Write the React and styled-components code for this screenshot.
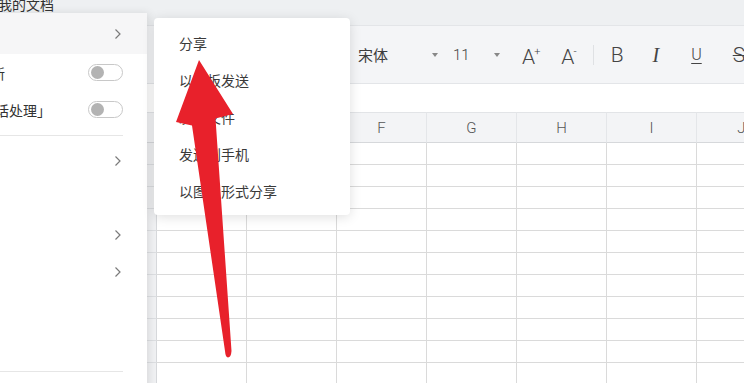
import React from "react";
import styled, { createGlobalStyle } from "styled-components";

const columns = ["", "D", "E", "F", "G", "H", "I", "J"];
const rowCount = 11;

const shareItems = ["分享", "以模板发送", "发送文件", "发送到手机", "以图片形式分享"];

const sideItems = [
  { chevron: true },
  { chevron: false },
  { chevron: true },
  { chevron: true },
  { chevron: false },
  { chevron: false },
];

const Chevron = () => (
  <ChevronIcon width="8" height="12" viewBox="0 0 8 12">
    <path d="M1.5 1.5L6 6l-4.5 4.5" fill="none" stroke="#7a7a7a" strokeWidth="1.2" />
  </ChevronIcon>
);

const Toggle = () => (
  <ToggleTrack>
    <ToggleKnob />
  </ToggleTrack>
);

const App = () => {
  return (
    <>
      <GlobalStyle />
      <Page>
        <TitleBar>
          <DocTitle>我的文档</DocTitle>
        </TitleBar>

        <Toolbar>
          <Select width={82}>
            <span>宋体</span>
            <Caret />
          </Select>
          <Select width={49} offset={13}>
            <Latin>11</Latin>
            <Caret />
          </Select>
          <SizeButton offset={20}>
            A<sup>+</sup>
          </SizeButton>
          <SizeButton offset={21}>
            A<sup>-</sup>
          </SizeButton>
          <Divider />
          <StyleButton offset={17}>B</StyleButton>
          <ItalicButton offset={29}>I</ItalicButton>
          <UnderlineButton offset={32}>U</UnderlineButton>
          <StrikeButton offset={31}>S</StrikeButton>
        </Toolbar>

        <FormulaBar />

        <Sheet>
          {columns.map((c, i) => (
            <HeaderCell key={c + i} corner={i === 0}>
              {c}
            </HeaderCell>
          ))}
          {Array.from({ length: rowCount }).map((_, r) =>
            columns.map((c, i) =>
              i === 0 ? <RowHead key={r + "-" + i} /> : <Cell key={r + "-" + i} />
            )
          )}
        </Sheet>

        <SideMenu>
          <MenuRow height={41} hovered>
            <Chevron />
          </MenuRow>
          <MenuRow>
            <CutLabel shift={-51}>自动更新</CutLabel>
            <Toggle />
          </MenuRow>
          <MenuRow>
            <CutLabel shift={-61}>启用「对话处理」</CutLabel>
            <Toggle />
          </MenuRow>
          <Separator />
          {sideItems.map((item, i) => (
            <MenuRow key={i}>{item.chevron && <Chevron />}</MenuRow>
          ))}
          <Separator />
        </SideMenu>

        <ShareMenu>
          {shareItems.map((t) => (
            <ShareItem key={t}>{t}</ShareItem>
          ))}
        </ShareMenu>

        <Annotation viewBox="0 0 744 383">
          <path
            d="M199 60 L233 114 L215.5 118.5 L231.5 351 Q231 357.5 228 357.5 Q225.5 357.5 225 351 L192 125.5 L176 122 Z"
            fill="#e8212b"
          />
        </Annotation>
      </Page>
    </>
  );
};

export default App;

const GlobalStyle = createGlobalStyle`
  html, body {
    margin: 0;
    padding: 0;
  }
  body {
    background: #eef0f2;
    font-family: "Noto Sans CJK SC", "Noto Sans", sans-serif;
  }
  * {
    box-sizing: border-box;
  }
`;

const Page = styled.div`
  position: relative;
  width: 744px;
  height: 383px;
  overflow: hidden;
  background: #eef0f2;
`;

const TitleBar = styled.div`
  height: 25px;
  background: #eef0f2;
  overflow: hidden;
`;

const DocTitle = styled.div`
  margin: -6px 0 0 -2px;
  font-size: 14px;
  line-height: 20px;
  color: #333;
`;

const Toolbar = styled.div`
  height: 58px;
  display: flex;
  align-items: center;
  padding-left: 358px;
  background: #f4f5f7;
  border-top: 1px solid #e3e5e8;
  color: #444;
`;

const Select = styled.div`
  flex: none;
  width: ${(p) => p.width}px;
  margin-left: ${(p) => p.offset || 0}px;
  display: flex;
  align-items: center;
  justify-content: space-between;
  font-size: 15px;
  color: #3d3d3d;
`;

const Latin = styled.span`
  font-family: Roboto, "Liberation Sans", sans-serif;
  font-weight: 300;
  font-size: 15px;
`;

const Caret = styled.span`
  width: 0;
  height: 0;
  margin-right: 2px;
  border-left: 3.5px solid transparent;
  border-right: 3.5px solid transparent;
  border-top: 4px solid #888;
`;

const SizeButton = styled.div`
  flex: none;
  margin-left: ${(p) => p.offset}px;
  font-family: Roboto, "Liberation Sans", sans-serif;
  font-weight: 300;
  font-size: 21px;
  line-height: 24px;
  color: #444;

  sup {
    font-size: 11px;
    vertical-align: 9px;
    margin-left: -1px;
  }
`;

const Divider = styled.div`
  flex: none;
  width: 1px;
  height: 20px;
  margin-left: 16px;
  background: #dfe1e4;
`;

const StyleButton = styled.div`
  flex: none;
  margin-left: ${(p) => p.offset}px;
  font-family: Roboto, "Liberation Sans", sans-serif;
  font-weight: 300;
  font-size: 21px;
  line-height: 24px;
  color: #444;
`;

const ItalicButton = styled(StyleButton)`
  font-family: "Liberation Serif", serif;
  font-style: italic;
  font-weight: 400;
  font-size: 20px;
`;

const UnderlineButton = styled(StyleButton)`
  font-size: 16px;
  text-decoration: underline;
  text-underline-offset: 3px;
  text-decoration-thickness: 1px;
`;

const StrikeButton = styled(StyleButton)`
  text-decoration: line-through;
  text-decoration-thickness: 1px;
`;

const FormulaBar = styled.div`
  height: 29px;
  background: #fff;
  border-top: 1px solid #e3e5e8;
`;

const Sheet = styled.div`
  display: grid;
  grid-template-columns: 157px repeat(7, 90px);
  grid-template-rows: 31px;
  grid-auto-rows: 22px;
  background: #fff;
`;

const HeaderCell = styled.div`
  display: flex;
  align-items: center;
  justify-content: center;
  background: #f3f4f6;
  border-top: 1px solid #e2e4e7;
  border-bottom: 1px solid #d6d8db;
  border-right: 1px solid ${(p) => (p.corner ? "#d6d8db" : "#e4e6e9")};
  font-family: Roboto, "Liberation Sans", sans-serif;
  font-weight: 300;
  font-size: 15px;
  color: #555;
`;

const RowHead = styled.div`
  background: #f0f1f3;
  border-right: 1px solid #d6d8db;
  border-bottom: 1px solid #dcdee1;
`;

const Cell = styled.div`
  border-right: 1px solid #dadada;
  border-bottom: 1px solid #dadada;
`;

const SideMenu = styled.div`
  position: absolute;
  left: 0;
  top: 13px;
  width: 147px;
  height: 400px;
  background: #fff;
  box-shadow: 2px 0 8px rgba(0, 0, 0, 0.1);
  overflow: hidden;
  font-size: 14px;
  color: #333;
`;

const MenuRow = styled.div`
  height: ${(p) => p.height || 37}px;
  display: flex;
  align-items: center;
  justify-content: flex-end;
  padding-right: 24px;
  background: ${(p) => (p.hovered ? "#f6f6f7" : "#fff")};
  white-space: nowrap;
`;

const CutLabel = styled.span`
  margin-left: ${(p) => p.shift}px;
  margin-right: auto;
`;

const ChevronIcon = styled.svg`
  display: block;
  margin-right: 1px;
`;

const ToggleTrack = styled.div`
  width: 35px;
  height: 17px;
  border: 1px solid #c8c8c8;
  border-radius: 9px;
  background: #fff;
  display: flex;
  align-items: center;
  padding-left: 2px;
`;

const ToggleKnob = styled.div`
  width: 13px;
  height: 13px;
  border-radius: 50%;
  background: #b3b3b3;
`;

const Separator = styled.div`
  height: 14px;
  display: flex;
  align-items: center;
  padding-right: 24px;

  &::after {
    content: "";
    flex: 1;
    height: 1px;
    background: #e6e6e6;
  }
`;

const ShareMenu = styled.div`
  position: absolute;
  left: 154px;
  top: 18px;
  width: 196px;
  height: 197px;
  padding: 6px 0;
  background: #fff;
  border-radius: 4px;
  box-shadow: 0 2px 12px rgba(0, 0, 0, 0.13);
`;

const ShareItem = styled.div`
  height: 37px;
  display: flex;
  align-items: center;
  padding-left: 25px;
  font-size: 14px;
  color: #3a3a3a;
`;

const Annotation = styled.svg`
  position: absolute;
  left: 0;
  top: 0;
  width: 744px;
  height: 383px;
  pointer-events: none;
`;
